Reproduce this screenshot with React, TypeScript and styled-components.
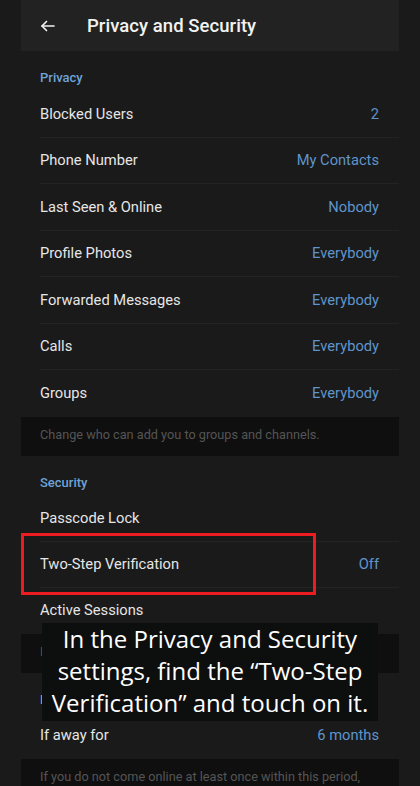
import React from "react";
import styled, { createGlobalStyle } from "styled-components";

const Global = createGlobalStyle`
  html, body { margin: 0; padding: 0; background: #1a1a1a; }
  * { box-sizing: border-box; }
`;

const Page = styled.div`
  position: relative;
  width: 420px;
  height: 786px;
  overflow: hidden;
  background: #1a1a1a;
  display: flex;
  justify-content: center;
  align-items: flex-start;
  font-family: Roboto, "Liberation Sans", sans-serif;
`;

const Screen = styled.div`
  width: 378px;
  display: flex;
  flex-direction: column;
  flex-shrink: 0;
  & > * { flex-shrink: 0; }
`;

const Header = styled.div`
  height: 51px;
  background: #222223;
  display: flex;
  align-items: center;
  padding-left: 18px;
  gap: 30px;
`;

const Title = styled.div`
  color: #f2f2f2;
  font-size: 18.5px;
  font-weight: 500;
  letter-spacing: 0.05px;
`;

const SectionTitle = styled.div`
  height: 40px;
  padding: 19px 19px 0;
  color: #6ea3d8;
  font-size: 13px;
  font-weight: 500;
`;

const Row = styled.div<{ $sep?: boolean; $h?: number }>`
  height: ${(p) => p.$h ?? 46.5}px;
  margin-left: 19px;
  padding-right: 20px;
  display: flex;
  align-items: center;
  justify-content: space-between;
  border-bottom: 1px solid ${(p) => (p.$sep ? "#232323" : "transparent")};
`;

const Label = styled.span`
  color: #e6e6e6;
  font-size: 14.7px;
`;

const Value = styled.span`
  color: #5f95cb;
  font-size: 14.7px;
`;

const Info = styled.div`
  height: 39px;
  background: #0f0f0f;
  padding: 10px 19px 0;
  color: #555555;
  font-size: 12.7px;
  white-space: nowrap;
`;

const Highlight = styled.div`
  position: absolute;
  left: 21px;
  top: 533px;
  width: 295px;
  height: 62px;
  border: 3px solid #ec1c20;
`;

const Caption = styled.div`
  position: absolute;
  left: 42px;
  top: 623px;
  width: 336px;
  height: 98px;
  background: #0d0e0e;
  color: #ffffff;
  font-family: "Open Sans", "Liberation Sans", sans-serif;
  font-size: 24px;
  line-height: 32px;
  text-align: center;
`;

const BackArrow = () => (
  <svg width="18" height="18" viewBox="0 0 24 24" fill="none" stroke="#f2f2f2" strokeWidth="2.2" strokeLinecap="round" strokeLinejoin="round">
    <path d="M20 12H4" />
    <path d="M10 6l-6 6 6 6" />
  </svg>
);

type Item = { label: string; value?: string };

const privacy: Item[] = [
  { label: "Blocked Users", value: "2" },
  { label: "Phone Number", value: "My Contacts" },
  { label: "Last Seen & Online", value: "Nobody" },
  { label: "Profile Photos", value: "Everybody" },
  { label: "Forwarded Messages", value: "Everybody" },
  { label: "Calls", value: "Everybody" },
  { label: "Groups", value: "Everybody" },
];

const security: Item[] = [
  { label: "Passcode Lock" },
  { label: "Two-Step Verification", value: "Off" },
  { label: "Active Sessions" },
];

const Rows = ({ items, h }: { items: Item[]; h?: number }) => (
  <>
    {items.map((it, i) => (
      <Row key={it.label} $h={h} $sep={i < items.length - 1}>
        <Label>{it.label}</Label>
        {it.value && <Value>{it.value}</Value>}
      </Row>
    ))}
  </>
);

export default function App() {
  return (
    <Page>
      <Global />
      <Screen>
        <Header>
          <BackArrow />
          <Title>Privacy and Security</Title>
        </Header>
        <SectionTitle>Privacy</SectionTitle>
        <Rows items={privacy} />
        <Info>Change who can add you to groups and channels.</Info>
        <SectionTitle>Security</SectionTitle>
        <Rows items={security} h={46} />
        <Info>Logged in with Telegram</Info>
        <SectionTitle>Delete my account</SectionTitle>
        <Rows items={[{ label: "If away for", value: "6 months" }]} />
        <Info>If you do not come online at least once within this period,</Info>
      </Screen>
      <Highlight />
      <Caption>
        In the Privacy and Security
        <br />
        settings, find the “Two-Step
        <br />
        Verification” and touch on it.
      </Caption>
    </Page>
  );
}
